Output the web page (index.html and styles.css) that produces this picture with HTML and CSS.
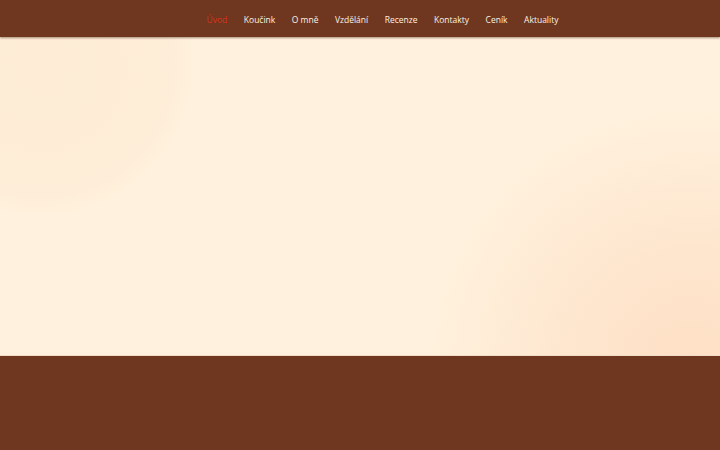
FILE: index.html
```html
<!DOCTYPE html>
<html lang="cs">
<head>
<meta charset="utf-8">
<title>Úvod</title>
<link rel="stylesheet" href="styles.css">
</head>
<body>
<header class="topbar">
  <nav class="menu">
    <a class="menu-link is-active" href="#">Úvod</a>
    <a class="menu-link" href="#">Koučink</a>
    <a class="menu-link" href="#">O mně</a>
    <a class="menu-link" href="#">Vzdělání</a>
    <a class="menu-link" href="#">Recenze</a>
    <a class="menu-link" href="#">Kontakty</a>
    <a class="menu-link" href="#">Ceník</a>
    <a class="menu-link" href="#">Aktuality</a>
  </nav>
</header>
<main class="hero"></main>
<footer class="footer"></footer>
</body>
</html>
```
FILE: styles.css
```css
html, body {
  margin: 0;
  padding: 0;
}

body {
  font-family: "Open Sans", "Liberation Sans", sans-serif;
  background: #6f371f;
}

.topbar {
  height: 37px;
  background: #6f371f;
  display: flex;
  align-items: center;
  justify-content: center;
  box-shadow: 0 1px 2px rgba(60, 25, 10, 0.45);
  position: relative;
  z-index: 1;
}

.menu {
  display: flex;
  gap: 16.5px;
  padding-left: 45px;
  padding-top: 2px;
}

.menu-link {
  color: #fdf1e3;
  text-decoration: none;
  font-size: 8.5px;
  line-height: 14px;
}

.menu-link.is-active {
  color: #d8321c;
}

.hero {
  display: block;
  height: 318px;
  background:
    radial-gradient(circle at 40px 25px, rgba(250, 226, 200, 0.35) 0, rgba(250, 226, 200, 0.3) 125px, rgba(250, 226, 200, 0) 155px),
    radial-gradient(circle at 690px 330px, rgba(253, 220, 192, 0.85) 0, rgba(253, 222, 195, 0.5) 140px, rgba(253, 228, 205, 0) 260px),
    #fff1dd;
  border-bottom: 1px solid #f3dcc6;
}

.footer {
  height: 94px;
  background: #6f371f;
}
```
